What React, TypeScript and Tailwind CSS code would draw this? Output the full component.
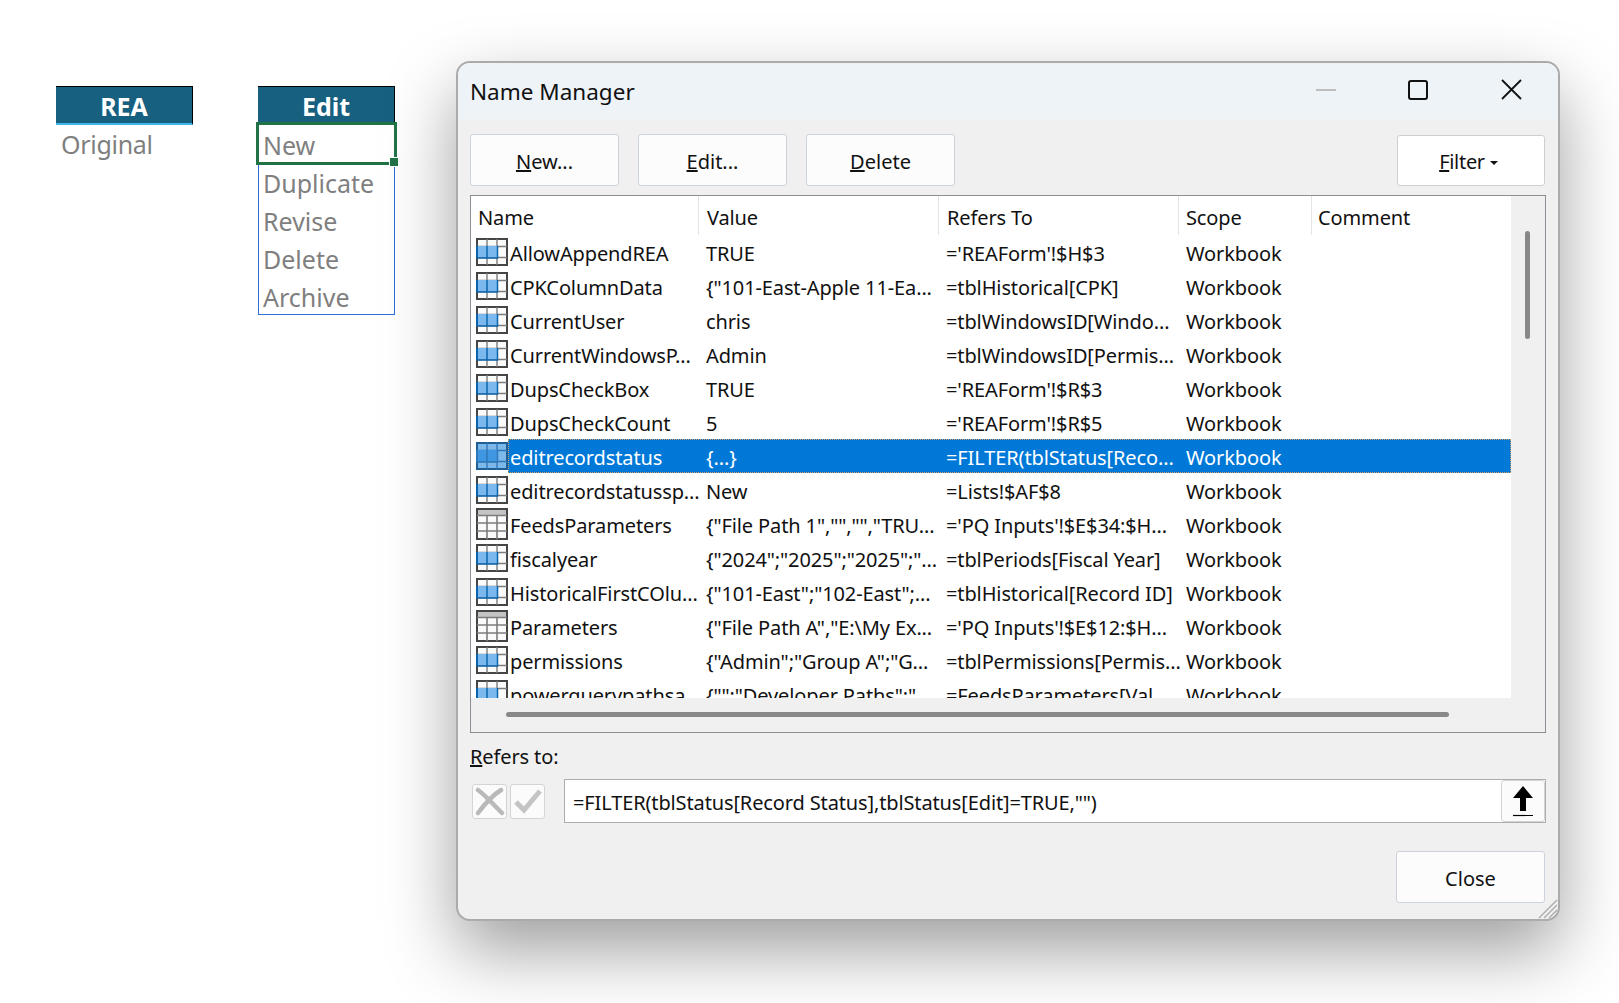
const uiFont = "font-['Noto_Sans',sans-serif]";

type Row = {
  name: string;
  value: string;
  refers: string;
  icon?: "name" | "table";
  selected?: boolean;
};

const rows: Row[] = [
  { name: "AllowAppendREA", value: "TRUE", refers: "='REAForm'!$H$3" },
  { name: "CPKColumnData", value: '{"101-East-Apple 11-Ea...', refers: "=tblHistorical[CPK]" },
  { name: "CurrentUser", value: "chris", refers: "=tblWindowsID[Windo..." },
  { name: "CurrentWindowsP...", value: "Admin", refers: "=tblWindowsID[Permis..." },
  { name: "DupsCheckBox", value: "TRUE", refers: "='REAForm'!$R$3" },
  { name: "DupsCheckCount", value: "5", refers: "='REAForm'!$R$5" },
  { name: "editrecordstatus", value: "{...}", refers: "=FILTER(tblStatus[Reco...", selected: true },
  { name: "editrecordstatussp...", value: "New", refers: "=Lists!$AF$8" },
  { name: "FeedsParameters", value: '{"File Path 1","","","TRU...', refers: "='PQ Inputs'!$E$34:$H...", icon: "table" },
  { name: "fiscalyear", value: '{"2024";"2025";"2025";"...', refers: "=tblPeriods[Fiscal Year]" },
  { name: "HistoricalFirstCOlu...", value: '{"101-East";"102-East";...', refers: "=tblHistorical[Record ID]" },
  { name: "Parameters", value: '{"File Path A","E:\\My Ex...', refers: "='PQ Inputs'!$E$12:$H...", icon: "table" },
  { name: "permissions", value: '{"Admin";"Group A";"G...', refers: "=tblPermissions[Permis..." },
  { name: "powerquerypathsa", value: '{"";"Developer Paths";"', refers: "=FeedsParameters[Val..." },
];

function NameIcon({ selected }: { selected?: boolean }) {
  const outer = selected ? "#1f5f94" : "#454545";
  const inner = selected ? "#2f78b8" : "#7c7c7c";
  const bg = selected ? "#7db8ea" : "#fbfbfb";
  const blue = selected ? "#3f97e2" : "#7ab8ee";
  const edge = selected ? "#2f78b8" : "#0a64ad";
  return (
    <svg width="32" height="28" viewBox="0 0 32 28" className="shrink-0">
      <rect x="1" y="1" width="30" height="26" fill={bg} stroke={outer} strokeWidth="2" />
      <path d="M11 1v26M21 1v26M1 8.500h30M1 19.500h30" stroke={inner} strokeWidth="1.400" fill="none" />
      <rect x="2" y="8" width="19" height="11.500" fill={blue} />
      <path d="M1 20h20.500V8M11 8v12" stroke={edge} strokeWidth="1.500" fill="none" />
      <path d="M1 8v12" stroke={edge} strokeWidth="2" fill="none" />
    </svg>
  );
}

function TableIcon() {
  return (
    <svg width="32" height="32" viewBox="0 0 32 32" className="shrink-0">
      <rect x="1" y="1" width="30" height="30" fill="#fafafa" stroke="#454545" strokeWidth="2" />
      <rect x="2" y="2" width="28" height="5" fill="#c4c4c4" />
      <path d="M1 7.500h30M1 15h30M1 23h30M11 7.500v24M21 7.500v24" stroke="#7c7c7c" strokeWidth="1.600" fill="none" />
    </svg>
  );
}

function DialogButton({
  children,
  size = "h-[52px] w-[149px] border-[#ccd3da] bg-[#fcfcfc]",
  className = "",
}: {
  children: React.ReactNode;
  size?: string;
  className?: string;
}) {
  return (
    <button className={`rounded-[3px] border pt-[3px] text-[20px] leading-none text-[#111] ${size} ${className}`}>
      {children}
    </button>
  );
}

function ListRow({ row }: { row: Row }) {
  const rowClass = row.selected ? "text-white" : "text-[#111]";
  return (
    <div className="flex h-[34px] items-center pl-[5px]">
      <div className="flex w-[32px] h-[34px] shrink-0 items-center">
        {row.icon === "table" ? <TableIcon /> : <NameIcon selected={row.selected} />}
      </div>
      <div
        className={`flex h-[34px] flex-1 items-center pt-[4px] tracking-[-0.12px] ${rowClass} ${
          row.selected ? "bg-[#0078d7] outline-1 -outline-offset-1 outline-dotted outline-[#c9a06a]" : ""
        }`}
      >
        <span className="w-[198px] shrink-0 whitespace-nowrap pl-[2px]">{row.name}</span>
        <span className="w-[240px] shrink-0 whitespace-nowrap">{row.value}</span>
        <span className="w-[240px] shrink-0 whitespace-nowrap">{row.refers}</span>
        <span className="whitespace-nowrap">Workbook</span>
      </div>
    </div>
  );
}

function HeaderCell({ label, className }: { label: string; className: string }) {
  return (
    <div className={`flex h-[39px] shrink-0 items-center border-r border-[#e4e4e4] pt-[5px] ${className}`}>{label}</div>
  );
}

export default function App() {
  return (
    <div className="flex min-h-[1003px] overflow-hidden bg-white pl-[56px] font-['Noto_Sans',sans-serif]">
      {/* sheet tables on the left */}
      <div className="mt-[86px] w-[137px] shrink-0">
        <div className="flex h-[39px] items-center justify-center border-t border-r border-t-black border-r-black border-b-2 border-b-[#41b4e8] bg-[#17607f] pt-[3px] text-[25px] font-bold text-white">
          REA
        </div>
        <div className="pl-[5px] text-[25px] leading-[38px] tracking-[-0.3px] text-[#7f7f7f]">Original</div>
      </div>

      <div className="ml-[65px] mt-[86px] w-[137px] shrink-0">
        <div className="flex h-[36px] items-center justify-center border-t border-r border-t-black border-r-black bg-[#17607f] pt-[5px] text-[25px] font-bold text-white">
          Edit
        </div>
        <div className="relative h-[193px] border border-[#2f6fd6] pl-[4px] pt-[3px] text-[25px] leading-[38px] text-[#7f7f7f]">
          <div>New</div>
          <div>Duplicate</div>
          <div>Revise</div>
          <div>Delete</div>
          <div>Archive</div>
          <div className="absolute -left-[3px] -top-[1px] h-[43px] w-[141px] border-[3px] border-[#217346]" />
          <div className="absolute -right-[5px] top-[34px] h-[10px] w-[10px] border border-white bg-[#217346]" />
        </div>
      </div>

      {/* Name Manager dialog */}
      <div className={`relative ml-[61px] mt-[61px] h-[860px] w-[1104px] shrink-0 overflow-hidden rounded-[14px] border-2 border-[#ababab] bg-[#f0f0f0] shadow-[0_30px_70px_rgba(0,0,0,0.38)] ${uiFont}`}>
        <div className="flex h-[56px] items-center bg-[#eef3f8] pl-[12px] pr-[36px] text-[22.500px] text-[#111]">
          <span className="pt-[2px]">Name Manager</span>
          <div className="mb-[3px] ml-auto flex items-center">
            <div className="mr-[72px] h-[2px] w-[20px] bg-[#bdbdbd]" />
            <div className="mr-[73px] h-[20px] w-[20px] rounded-[3px] border-2 border-[#111]" />
            <svg width="21" height="21" viewBox="0 0 21 21">
              <path d="M1 1l19 19M20 1L1 20" stroke="#111" strokeWidth="1.800" fill="none" />
            </svg>
          </div>
        </div>

        <div className="px-[12px]">
          <div className="flex gap-[19px] pt-[15px]">
            <DialogButton><span className="underline">N</span>ew...</DialogButton>
            <DialogButton><span className="underline">E</span>dit...</DialogButton>
            <DialogButton><span className="underline">D</span>elete</DialogButton>
            <DialogButton size="h-[51px] w-[148px] border-[#cfcfcf] bg-white" className="ml-auto mr-px mt-px pr-[5px] tracking-[-0.3px]">
              <span className="underline">F</span>ilter
              <span className="ml-[5px] inline-block h-0 w-0 border-x-[4px] border-t-[4px] border-x-transparent border-t-[#111] align-[4px]" />
            </DialogButton>
          </div>

          <div className="mt-[9px] h-[538px] border border-[#8b8f96] text-[20px]">
            <div className="flex h-[502px]">
              <div className="h-[502px] w-[1040px] shrink-0 overflow-hidden bg-white">
                <div className="flex pl-[7px] text-[#111] tracking-[-0.12px]">
                  <HeaderCell label="Name" className="w-[221px]" />
                  <HeaderCell label="Value" className="w-[240px] pl-[8px]" />
                  <HeaderCell label="Refers To" className="w-[240px] pl-[8px]" />
                  <HeaderCell label="Scope" className="w-[133px] pl-[7px]" />
                  <div className="flex h-[39px] items-center pl-[6px] pt-[5px]">Comment</div>
                </div>
                {rows.map((row) => (
                  <ListRow key={row.name} row={row} />
                ))}
              </div>
              <div className="flex-1 bg-[#f0f0f0] pl-[14px] pt-[35px]">
                <div className="h-[108px] w-[5px] rounded-full bg-[#888]" />
              </div>
            </div>
            <div className="flex h-[34px] bg-[#f0f0f0] pl-[35px] pt-[14px]">
              <div className="h-[5px] w-[943px] rounded-full bg-[#888]" />
            </div>
          </div>

          <div className="mt-[7px] h-[39px] text-[20px] leading-[34px] tracking-[-0.12px] text-[#111]">
            <span className="underline">R</span>efers to:
          </div>

          <div className="flex h-[44px] items-center">
            <div className="ml-[2px] flex h-[35px] w-[35px] items-center justify-center rounded-[3px] border border-[#d4d4d4] bg-[#fbfbfb]">
              <svg width="30" height="30" viewBox="0 0 30 30">
                <path d="M3 4c7 5 17 16 24 23M26 4C18 9 9 19 3 27" stroke="#b9b9b9" strokeWidth="4.500" fill="none" strokeLinecap="round" />
              </svg>
            </div>
            <div className="ml-[3px] flex h-[35px] w-[35px] items-center justify-center rounded-[3px] border border-[#d4d4d4] bg-[#fbfbfb]">
              <svg width="30" height="28" viewBox="0 0 30 28">
                <path d="M3 15l8 8L27 4" stroke="#c4c4c4" strokeWidth="5" fill="none" />
              </svg>
            </div>
            <div className="ml-[19px] flex h-[44px] flex-1 items-center border border-[#adadad] bg-white pl-[8px] text-[20px] text-[#111]">
              <span className="whitespace-nowrap pt-[4px] tracking-[-0.13px]">=FILTER(tblStatus[Record Status],tblStatus[Edit]=TRUE,"")</span>
              <div className="ml-auto flex h-[42px] w-[44px] items-center justify-center rounded-[3px] border border-[#d4d4d4] bg-[#fbfbfb]">
                <svg width="22" height="32" viewBox="0 0 22 32">
                  <path d="M11 1L1 13h7v13h6V13h7z" fill="#000" />
                  <path d="M1 30.500h20" stroke="#000" strokeWidth="1.200" />
                </svg>
              </div>
            </div>
          </div>

          <div className="mt-[28px] flex justify-end">
            <DialogButton className="mr-px">Close</DialogButton>
          </div>
        </div>

        <svg width="22" height="22" viewBox="0 0 22 22" className="absolute bottom-0 right-0">
          <path d="M21 3L3 21M21 8L8 21M21 13L13 21" stroke="#a8a8a8" strokeWidth="1.200" fill="none" />
        </svg>
      </div>
    </div>
  );
}
